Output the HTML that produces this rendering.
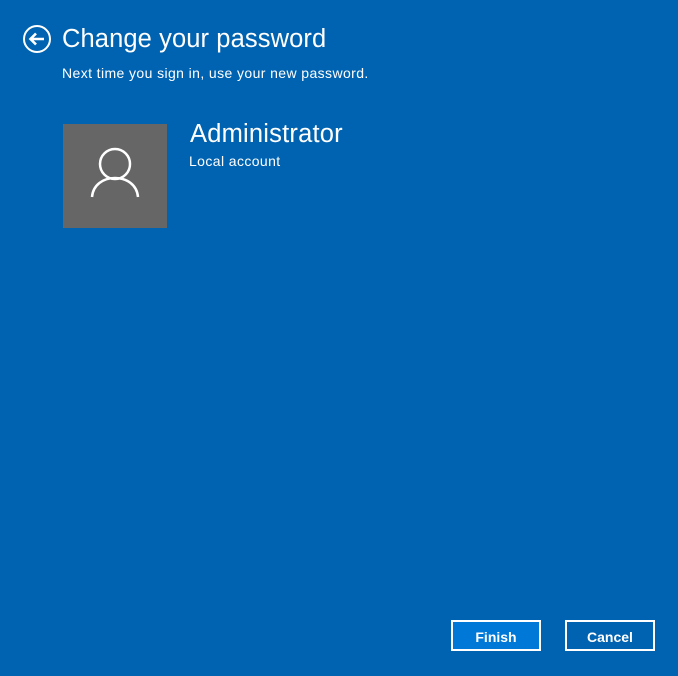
<!DOCTYPE html>
<html><head><style>
body{margin:0;width:678px;height:676px;background:#0063b1;font-family:"Liberation Sans",sans-serif;color:#fff;position:relative;overflow:hidden}
.a{position:absolute;white-space:nowrap}
.btn{position:absolute;top:620px;width:86px;height:27px;border:2px solid #fff;font-size:14px;font-weight:bold;text-align:center;line-height:31px}
</style></head><body>
<svg class="a" style="left:22px;top:24px" width="30" height="30" viewBox="0 0 30 30"><circle cx="15" cy="15" r="13" fill="none" stroke="#fff" stroke-width="2"/><path d="M22 15H9M14 9.5L8.5 15L14 20.5" fill="none" stroke="#fff" stroke-width="2.6"/></svg>
<div class="a" style="left:62px;top:25px;font-size:25.5px;letter-spacing:0.1px">Change your password</div>
<div class="a" style="left:62px;top:65px;font-size:14px;letter-spacing:0.4px">Next time you sign in, use your new password.</div>
<div class="a" style="left:63px;top:124px;width:104px;height:104px;background:#666"></div>
<svg class="a" style="left:63px;top:124px" width="104" height="104" viewBox="0 0 104 104"><circle cx="52" cy="40" r="15" fill="none" stroke="#fff" stroke-width="2.5"/><path d="M29 73C30 61 40 54 52 54S74 61 75 73" fill="none" stroke="#fff" stroke-width="2.5"/></svg>
<div class="a" style="left:190px;top:120px;font-size:25.5px;letter-spacing:0.2px">Administrator</div>
<div class="a" style="left:189px;top:153px;font-size:14px;letter-spacing:0.4px">Local account</div>
<div class="btn" style="left:451px;background:#0078d7">Finish</div>
<div class="btn" style="left:565px">Cancel</div>
</body></html>
